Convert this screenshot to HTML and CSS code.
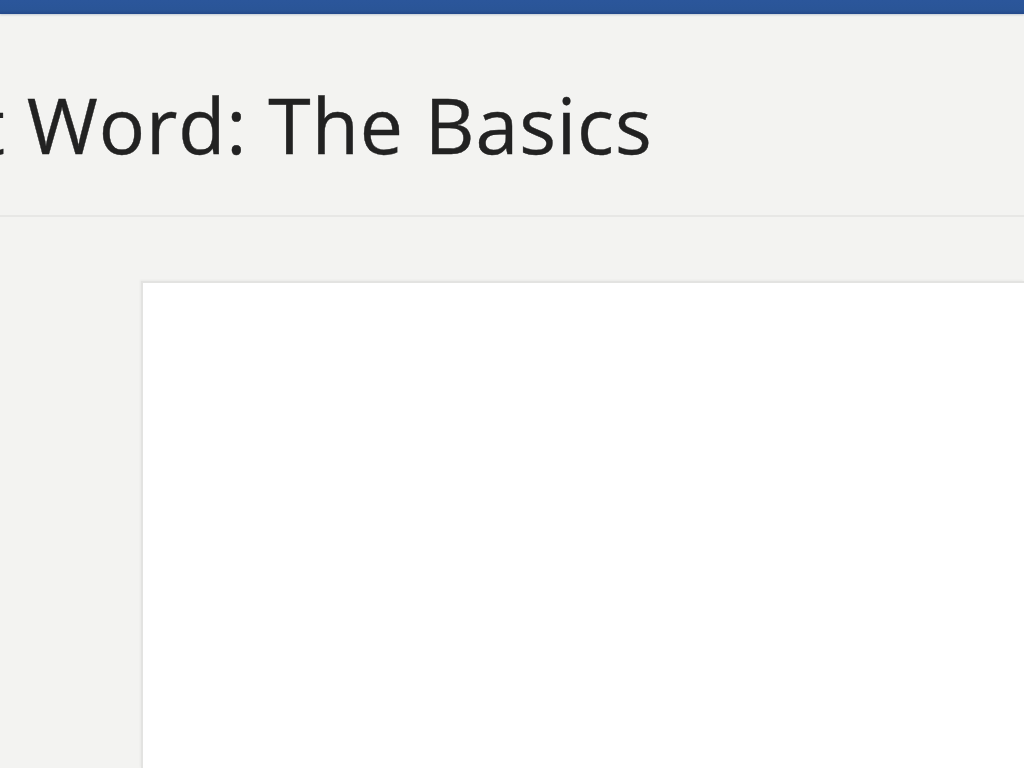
FILE: index.html
```html
<!DOCTYPE html>
<html lang="en">
<head>
<meta charset="utf-8">
<title>Word: The Basics</title>
<link rel="stylesheet" href="styles.css">
</head>
<body>
  <div class="topbar"></div>
  <header class="header">
    <h1 class="title"><span class="cut">Microsoft</span> Word: The Basics</h1>
  </header>
  <main class="workspace">
    <div class="page"></div>
  </main>
</body>
</html>
```

FILE: styles.css
```css
html, body {
  margin: 0;
  padding: 0;
  height: 100%;
}
body {
  background: #f3f3f1;
  overflow: hidden;
  display: flex;
  flex-direction: column;
}
.topbar {
  height: 14px;
  flex: none;
  background: linear-gradient(to bottom, #2b569b 0%, #2a5597 70%, #23488a 100%);
  box-shadow: 0 1px 2px rgba(40, 70, 120, 0.25);
}
.header {
  height: 201px;
  flex: none;
  display: flex;
  align-items: center;
  border-bottom: 2px solid #e7e7e5;
  overflow: hidden;
}
.title {
  margin: 0 0 0 -342px;
  white-space: nowrap;
  font-family: "Open Sans", "Noto Sans", sans-serif;
  font-weight: 400;
  font-size: 77px;
  color: #222222;
  letter-spacing: 0.9px;
  padding-top: 20px;
  -webkit-text-stroke: 0.4px #222222;
}
.workspace {
  flex: 1;
  padding: 64px 0 0 141px;
  display: flex;
  overflow: hidden;
}
.page {
  flex: 1;
  background: #ffffff;
  border-top: 2px solid #e3e3e1;
  border-left: 2px solid #e3e3e1;
  box-shadow: -1px -1px 2px rgba(0, 0, 0, 0.04);
}
```
